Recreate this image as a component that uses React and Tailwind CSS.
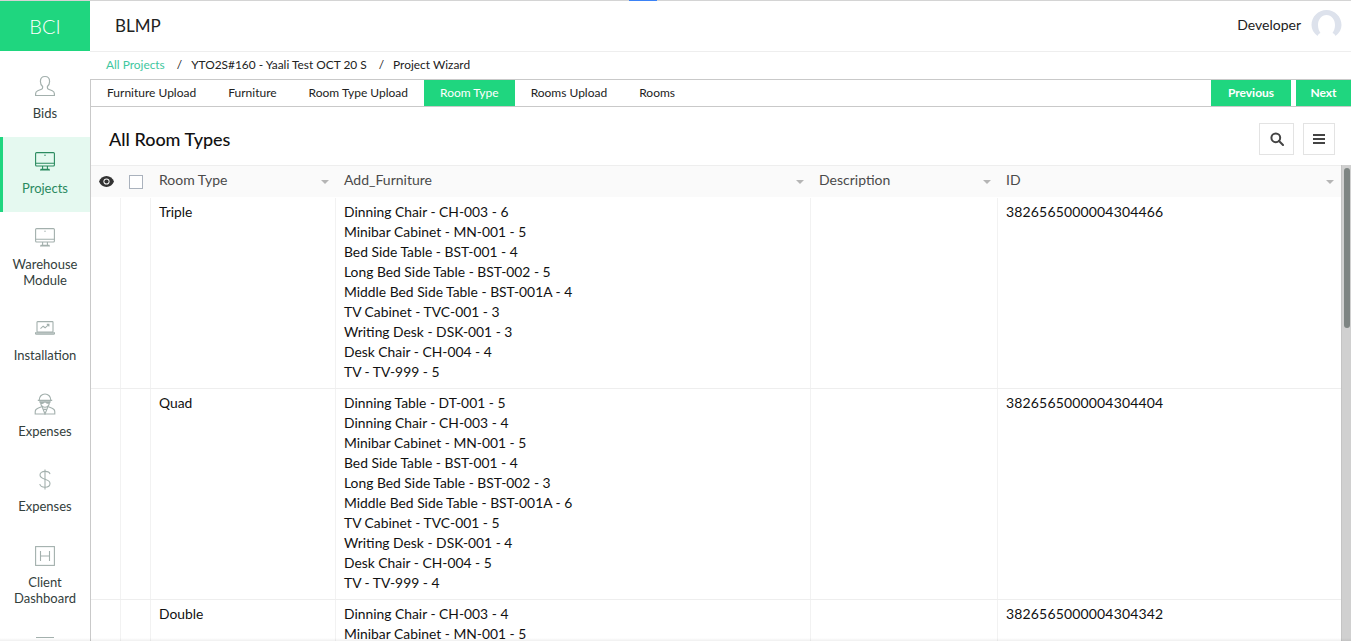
import React from "react";

function UserIcon() {
  return (
    <svg width="22" height="22" viewBox="0 0 22 22" fill="none" stroke="#a3b0ad" strokeWidth="1.2" className="block">
      <path d="M11 1.5c2.900 0 4.600 2.100 4.600 4.900 0 2.300-1 4-2.200 5.100v1.300c0 .7.4 1.100 1.100 1.400l3.800 1.600c1.400.6 2.100 1.600 2.100 3v1.700H1.600v-1.700c0-1.400.7-2.400 2.100-3l3.800-1.600c.7-.3 1.100-.7 1.100-1.400v-1.300C7.400 10.400 6.400 8.700 6.400 6.400c0-2.800 1.700-4.900 4.600-4.900z" />
    </svg>
  );
}
function MonitorIcon({ color = "#a3b0ad" }) {
  return (
    <svg width="20" height="20" viewBox="0 0 20 20" fill="none" stroke={color} strokeWidth="1.1" className="block">
      <rect x="0.6" y="0.6" width="18.8" height="13.4" rx="1" />
      <path d="M0.6 11.3h18.8M7.6 14v3.200M12.400 14v3.200M5 18h10M5.600 17.400h8.800" />
      <circle cx="10" cy="3.200" r="0.7" fill={color} stroke="none" />
    </svg>
  );
}
function LaptopIcon() {
  return (
    <svg width="20" height="14" viewBox="0 0 20 14" fill="none" stroke="#a3b0ad" strokeWidth="1.1" className="block mb-[4px]">
      <rect x="2" y="0.6" width="16" height="10.4" rx="0.6" />
      <path d="M0.4 11.800h19.200v.4c0 .5-.4.9-.9.9H1.300c-.5 0-.9-.4-.9-.9z" />
      <path d="M5.500 7.600l2.600-2.400 2 1.600 3.600-3.200M11.800 3.400h2.100v2" />
    </svg>
  );
}
function ManIcon() {
  return (
    <svg width="22" height="22" viewBox="0 0 22 22" fill="none" stroke="#a3b0ad" strokeWidth="1.1" className="block">
      <path d="M5.200 7.200c0-3.600 2.500-6.200 5.800-6.200s5.800 2.600 5.800 6.200M3.800 7.400h14.400" />
      <path d="M5.800 8.200c0 .9.3 1.700 1 1.900 1.300.4 2.600.1 3.200-.7.5-.4 1.500-.4 2 0 .6.8 1.900 1.100 3.200.7.7-.2 1-1 1-1.900" fill="#a3b0ad" />
      <path d="M6.600 10.400c.6 2.400 2.300 3.900 4.400 3.900s3.800-1.500 4.400-3.900" />
      <path d="M8.200 13.600l-4.300 1.600c-1.600.6-2.700 1.700-2.700 3.500V21h19.600v-2.300c0-1.800-1.100-2.900-2.700-3.500l-4.300-1.600" />
      <path d="M8.200 14l2.800 7 2.800-7M9.800 16.400h2.400" />
    </svg>
  );
}
function DollarIcon() {
  return (
    <svg width="12" height="21" viewBox="0 0 12 21" fill="none" stroke="#a3b0ad" strokeWidth="1.1" className="block">
      <path d="M6 0.5v20" />
      <path d="M11 5.200C10.600 3.200 8.600 2.400 6 2.400 3 2.400 1 3.800 1 6.100c0 2.400 2 3.300 5 4.200 3 .9 5 1.800 5 4.200 0 2.300-2 3.700-5 3.700-2.800 0-4.800-1-5.200-3.200" />
    </svg>
  );
}
function HBoxIcon() {
  return (
    <svg width="20" height="20" viewBox="0 0 20 20" fill="none" stroke="#a3b0ad" strokeWidth="1.1" className="block">
      <rect x="0.6" y="0.6" width="18.8" height="18.8" />
      <path d="M5.500 5v10M14.500 5v10M5.500 10h9" />
    </svg>
  );
}

function NavItem({ icon, label, active, h, pt }) {
  return (
    <div className={`relative flex flex-col items-center shrink-0 ${h} ${pt} ${active ? "bg-[#e5f9f0]" : ""}`}>
      {active && <div className="absolute left-0 top-0 bottom-0 w-[3px] bg-[#1fd67f]" />}
      <div className="h-[24px] flex items-end justify-center">{icon}</div>
      <div className={`mt-[8px] text-[13px] leading-[16px] text-center ${active ? "text-[#2a8a5f]" : "text-[#33403c]"}`}>{label}</div>
    </div>
  );
}

function Sidebar() {
  return (
    <aside className="w-[90px] shrink-0 flex flex-col overflow-hidden bg-white">
      <div className="h-[50px] shrink-0 bg-[#1fd67f] text-white text-[20px] flex items-center justify-center font-light">BCI</div>
      <NavItem h="h-[86px]" pt="pt-[22px]" icon={<UserIcon />} label="Bids" />
      <NavItem h="h-[75px]" pt="pt-[11px]" active icon={<MonitorIcon color="#2a8a5f" />} label="Projects" />
      <NavItem h="h-[91px]" pt="pt-[12px]" icon={<MonitorIcon />} label={<>Warehouse<br />Module</>} />
      <NavItem h="h-[75px]" pt="pt-[12px]" icon={<LaptopIcon />} label="Installation" />
      <NavItem h="h-[76px]" pt="pt-[13px]" icon={<ManIcon />} label="Expenses" />
      <NavItem h="h-[75px]" pt="pt-[12px]" icon={<DollarIcon />} label="Expenses" />
      <NavItem h="h-[108px]" pt="pt-[13px]" icon={<HBoxIcon />} label={<>Client<br />Dashboard</>} />
      <div className="mx-auto w-[18px] border-t border-[#a3b0ad]" />
    </aside>
  );
}

const tabs = ["Furniture Upload", "Furniture", "Room Type Upload", "Room Type", "Rooms Upload", "Rooms"];

const rows = [
  { name: "Triple", id: "3826565000004304466", items: ["Dinning Chair - CH-003 - 6", "Minibar Cabinet - MN-001 - 5", "Bed Side Table - BST-001 - 4", "Long Bed Side Table - BST-002 - 5", "Middle Bed Side Table - BST-001A - 4", "TV Cabinet - TVC-001 - 3", "Writing Desk - DSK-001 - 3", "Desk Chair - CH-004 - 4", "TV - TV-999 - 5"] },
  { name: "Quad", id: "3826565000004304404", items: ["Dinning Table - DT-001 - 5", "Dinning Chair - CH-003 - 4", "Minibar Cabinet - MN-001 - 5", "Bed Side Table - BST-001 - 4", "Long Bed Side Table - BST-002 - 3", "Middle Bed Side Table - BST-001A - 6", "TV Cabinet - TVC-001 - 5", "Writing Desk - DSK-001 - 4", "Desk Chair - CH-004 - 5", "TV - TV-999 - 4"] },
  { name: "Double", id: "3826565000004304342", items: ["Dinning Chair - CH-003 - 4", "Minibar Cabinet - MN-001 - 5"] },
];

const colGrid = "grid grid-cols-[30px_30px_185px_475px_187px_1fr]";

function Caret() {
  return <span className="absolute right-[7px] top-[14px] w-0 h-0 border-l-[4px] border-r-[4px] border-t-[4px] border-l-transparent border-r-transparent border-t-[#b5b5b5]" />;
}

function HeadCell({ children }) {
  return <div className="relative px-[8px] text-[#4a4a4a] text-[14px] leading-[28px]">{children}<Caret /></div>;
}

export default function App() {
  return (
    <div className="relative h-screen w-full overflow-hidden bg-white text-[#111] flex flex-col" style={{ fontFamily: '"Lato", "Open Sans", sans-serif' }}>
      <div className="h-px shrink-0 bg-[#d4d4d4] relative">
        <div className="absolute left-[629px] top-0 w-[28px] h-px bg-[#3b82f6]" />
      </div>
      <div className="flex flex-1 min-h-0">
        <Sidebar />
        <main className="flex-1 min-w-0 flex flex-col">
          <header className="h-[51px] shrink-0 border-b border-[#eeeeee] flex items-center justify-between pl-[25px] pr-[9px]">
            <div className="text-[17px] text-[#222]">BLMP</div>
            <div className="flex items-center gap-[10px] pb-[2px]">
              <span className="text-[14px] text-[#222] mb-[2px]">Developer</span>
              <svg width="31" height="26" viewBox="0 0 30 26" className="mb-[5px]">
                <path d="M6 26C2 23 0 19 0 15 0 6.700 6.700 0 15 0s15 6.700 15 15c0 4-2 8-6 11-.5-1.500-1.500-2.500-3-3 1.500-2 2.500-5 2.500-8 0-5.500-3.500-10-8.500-10s-8.500 4.500-8.500 10c0 3 1 6 2.500 8-1.500.5-2.500 1.500-3 3z" fill="#dde2ec" />
              </svg>
            </div>
          </header>
          <div className="h-[27px] shrink-0 flex items-center pl-[16px] pb-[1px] text-[11.9px] text-[#222]">
            <span className="text-[#3fc7a0]">All Projects</span>
            <span className="ml-[12px] mr-[9px]">/</span>
            <span>YTO2S#160 - Yaali Test OCT 20 S</span>
            <span className="ml-[12px] mr-[9px]">/</span>
            <span>Project Wizard</span>
          </div>
          <nav className="h-[28px] shrink-0 border-y border-l border-[#c9c9c9] flex items-stretch text-[12px] text-[#222]">
            <div className="flex">
              {tabs.map((t) => (
                <div key={t} className={`flex items-center px-[16px] ${t === "Room Type" ? "bg-[#1fd67f] text-white" : ""}`}>{t}</div>
              ))}
            </div>
            <div className="ml-auto flex gap-[5px] font-bold text-white">
              <div className="w-[80px] bg-[#1fd67f] flex items-center justify-center">Previous</div>
              <div className="w-[55px] bg-[#1fd67f] flex items-center justify-center">Next</div>
            </div>
          </nav>
          <div className="flex-1 min-h-0 flex flex-col border-l border-[#c9c9c9]">
            <div className="h-[58px] shrink-0 flex items-center justify-between pt-[6px] pl-[18px] pr-[16px]">
              <h1 className="text-[18px] font-medium text-[#111]">All Room Types</h1>
              <div className="flex gap-[9px]">
                <button className="w-[35px] h-[32px] border border-[#e3e3e3] flex items-center justify-center">
                  <svg width="14" height="14" viewBox="0 0 14 14" fill="none" stroke="#444" strokeWidth="2"><circle cx="5.800" cy="5.800" r="4.400" /><path d="M9 9l4 4" strokeLinecap="round" /></svg>
                </button>
                <button className="w-[32px] h-[32px] border border-[#e3e3e3] flex items-center justify-center">
                  <svg width="12" height="10" viewBox="0 0 12 10" fill="#444"><rect width="12" height="2" /><rect y="4" width="12" height="2" /><rect y="8" width="12" height="2" /></svg>
                </button>
              </div>
            </div>
            <div className="flex-1 min-h-0 flex">
              <div className="flex-1 min-w-0 overflow-hidden">
                <div className={`${colGrid} h-[32px] bg-[#fafafa] border-t border-[#eeeeee]`}>
                  <div className="flex items-center justify-center">
                    <svg width="15" height="11" viewBox="0 0 15 11"><path d="M7.500 0C4 0 1.300 2.200 0 5.500 1.300 8.800 4 11 7.500 11S13.700 8.800 15 5.500C13.700 2.200 11 0 7.500 0z" fill="#333" /><circle cx="7.500" cy="5.500" r="3.100" fill="#fafafa" /><circle cx="7.500" cy="5.500" r="2.100" fill="#333" /></svg>
                  </div>
                  <div className="flex items-center justify-center">
                    <span className="w-[14px] h-[14px] border border-[#aab2bd] bg-white" />
                  </div>
                  <HeadCell>Room Type</HeadCell>
                  <HeadCell>Add_Furniture</HeadCell>
                  <HeadCell>Description</HeadCell>
                  <HeadCell>ID</HeadCell>
                </div>
                <div className="pt-px">
                  {rows.map((r) => (
                    <div key={r.name} className={`${colGrid} border-b border-[#eeeeee] text-[13.85px] leading-[20px] text-[#111]`}>
                      <div className="border-r border-[#f2f2f2]" />
                      <div className="border-r border-[#f2f2f2]" />
                      <div className="border-r border-[#f2f2f2] px-[8px] pt-[4px] pb-[6px]">{r.name}</div>
                      <div className="border-r border-[#f2f2f2] px-[8px] pt-[4px] pb-[6px]">
                        {r.items.map((i) => <div key={i}>{i}</div>)}
                      </div>
                      <div className="border-r border-[#f2f2f2]" />
                      <div className="px-[8px] pt-[4px] pb-[6px] text-[14px] tracking-[0.16px]">{r.id}</div>
                    </div>
                  ))}
                </div>
              </div>
              <div className="w-[10px] shrink-0 bg-[#d0d0d0] border-l border-[#c4c4c4] pt-[3px] pl-[2px]">
                <div className="h-[160px] w-[6px] rounded-[3px] bg-[#7e8583]" />
              </div>
            </div>
          </div>
        </main>
      </div>
      <div className="absolute left-0 right-0 bottom-0 h-[3px] bg-gradient-to-b from-transparent to-[#00000010]" />
    </div>
  );
}
